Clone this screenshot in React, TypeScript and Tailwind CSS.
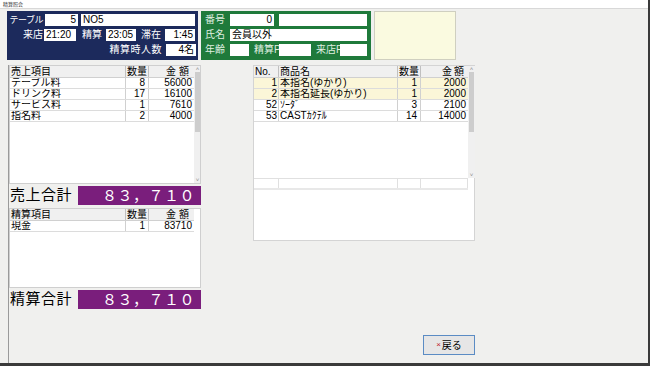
import React from "react";

const font = { fontFamily: '"Liberation Sans","Noto Sans CJK JP",sans-serif' };

const Box: React.FC<{ w: string; right?: boolean; children?: React.ReactNode }> = ({ w, right, children }) => (
  <div
    className={`${w} shrink-0 h-[12px] bg-white text-black text-[10px] leading-[12px] px-[2px] whitespace-nowrap overflow-hidden ${
      right ? "text-right" : ""
    }`}
  >
    {children}
  </div>
);

const Label: React.FC<{ w: string; children: React.ReactNode }> = ({ w, children }) => (
  <div className={`${w} shrink-0 whitespace-nowrap overflow-visible leading-[12px]`}>{children}</div>
);

const ScrollBar: React.FC<{ thumb?: boolean }> = ({ thumb = true }) => (
  <div className="w-[7px] shrink-0 h-full bg-[#f0f0f0] flex flex-col items-center">
    <div className="h-[6px] text-[6px] leading-[6px] text-[#888]">˄</div>
    {thumb && <div className="w-[5px] h-[60px] bg-[#cdcdcd]" />}
    <div className="flex-1" />
    <div className="h-[6px] text-[6px] leading-[6px] text-[#888]">˅</div>
  </div>
);

type Row = { name: string; qty: string; amount: string };

const cell = "overflow-hidden whitespace-nowrap leading-[10px]";

const LeftList: React.FC<{ title: string; rows: Row[]; h: string; scroll?: boolean }> = ({ title, rows, h, scroll }) => (
  <div className={`${h} w-[192px] bg-white border border-[#cfcfcf] flex overflow-hidden`}>
    <div className="w-[184px] flex flex-col">
      <div className="flex h-[12px] shrink-0 bg-[#f0f0f0] border-b border-[#d0d0d0] text-[10px] overflow-hidden">
        <div className={`w-[116px] pl-[1px] border-r border-[#c0c0c0] ${cell} leading-[11px]`}>{title}</div>
        <div className={`w-[23px] text-center border-r border-[#c0c0c0] ${cell} leading-[11px]`}>数量</div>
        <div className={`w-[45px] text-right pr-[2px] tracking-[3px] ${cell} leading-[11px]`}>金額</div>
      </div>
      {rows.map((r, i) => (
        <div key={i} className="flex h-[11px] shrink-0 border-b border-[#dcdcdc] text-[10px] overflow-hidden">
          <div className={`w-[116px] pl-[1px] border-r border-[#d0d0d0] ${cell}`}>{r.name}</div>
          <div className={`w-[23px] text-right pr-[3px] border-r border-[#d0d0d0] ${cell}`}>{r.qty}</div>
          <div className={`w-[45px] text-right pr-[2px] ${cell}`}>{r.amount}</div>
        </div>
      ))}
    </div>
    {scroll && <ScrollBar />}
  </div>
);

const Total: React.FC<{ label: string; value: string }> = ({ label, value }) => (
  <div className="flex items-center h-[20px] w-[193px]">
    <div className="w-[69px] shrink-0 pl-[1px] text-[15px] leading-[20px] text-black tracking-[0.5px] whitespace-nowrap">{label}</div>
    <div className="w-[123px] shrink-0 h-[19px] bg-[#7a1e7c] text-white text-[15px] leading-[19px] text-right pr-[6px] tracking-[0.5px] whitespace-nowrap">
      {value}
    </div>
  </div>
);

const items = [
  { no: "1", name: "本指名(ゆかり)", qty: "1", amount: "2000", hi: true },
  { no: "2", name: "本指名延長(ゆかり)", qty: "1", amount: "2000", hi: true },
  { no: "52", name: "ｿｰﾀﾞ", qty: "3", amount: "2100", hi: false },
  { no: "53", name: "CASTｶｸﾃﾙ", qty: "14", amount: "14000", hi: false },
];

export default function App() {
  return (
    <div style={font} className="w-[650px] h-[366px] bg-[#f0f0ee] flex flex-col overflow-hidden border-r-2 border-b-[3px] border-[#3a3a3a] text-black">
      <div className="h-[9px] bg-white border-b border-[#d8d8d8] text-[5px] leading-[8px] pl-[3px] text-[#333]">精算照会</div>

      <div className="flex gap-[3px] mt-[2px] ml-[7px]">
        <div className="w-[191px] h-[49px] bg-[#1c2a5c] text-white text-[10px] flex flex-col gap-[3px] pt-[3px]">
          <div className="flex items-center">
            <Label w="w-[38px] pr-[2px] text-right text-[9px] tracking-[-0.5px]">テーブル</Label>
            <Box w="w-[33px]" right>5</Box>
            <div className="w-[3px] shrink-0" />
            <Box w="w-[114px]">NO5</Box>
          </div>
          <div className="flex items-center">
            <Label w="w-[37px] pr-[1px] text-right">来店</Label>
            <Box w="w-[32px]">21:20</Box>
            <Label w="w-[30px] pr-[4px] text-right">精算</Label>
            <Box w="w-[30px]">23:05</Box>
            <Label w="w-[29px] pr-[4px] text-right">滞在</Label>
            <Box w="w-[30px]" right>1:45</Box>
          </div>
          <div className="flex items-center justify-end pr-[2px]">
            <Label w="w-auto pr-[4px] tracking-[0.5px]">精算時人数</Label>
            <Box w="w-[30px]" right>4名</Box>
          </div>
        </div>

        <div className="w-[170px] h-[49px] bg-[#1f7a3b] text-[#dfeee0] text-[10px] flex flex-col gap-[3px] pt-[3px]">
          <div className="flex items-center">
            <Label w="w-[29px] pl-[4px]">番号</Label>
            <Box w="w-[44px]" right>0</Box>
            <div className="w-[5px] shrink-0" />
            <Box w="w-[88px]"></Box>
          </div>
          <div className="flex items-center">
            <Label w="w-[29px] pl-[4px]">氏名</Label>
            <Box w="w-[137px]">会員以外</Box>
          </div>
          <div className="flex items-center">
            <Label w="w-[29px] pl-[4px]">年齢</Label>
            <Box w="w-[19px]"></Box>
            <Label w="w-[30px] pl-[5px]">精算P</Label>
            <Box w="w-[32px]"></Box>
            <Label w="w-[29px] pl-[5px]">来店P</Label>
            <Box w="w-[27px]"></Box>
          </div>
        </div>

        <div className="w-[82px] h-[49px] bg-[#fafae0] border border-[#cfcfc0]" />
      </div>

      <div className="flex flex-1 mt-[5px]">
        <div className="ml-[8px] w-[193px] border-l border-[#9a9a9a] flex flex-col">
          <LeftList
            title="売上項目"
            h="h-[119px]"
            scroll
            rows={[
              { name: "テーブル料", qty: "8", amount: "56000" },
              { name: "ドリンク料", qty: "17", amount: "16100" },
              { name: "サービス料", qty: "1", amount: "7610" },
              { name: "指名料", qty: "2", amount: "4000" },
            ]}
          />
          <div className="mt-[1px]">
            <Total label="売上合計" value="８３，７１０" />
          </div>
          <div className="mt-[3px]">
            <LeftList title="精算項目" h="h-[80px]" rows={[{ name: "現金", qty: "1", amount: "83710" }]} />
          </div>
          <div className="mt-[1px]">
            <Total label="精算合計" value="８３，７１０" />
          </div>
        </div>

        <div className="ml-[52px] flex flex-col flex-1">
          <div className="w-[222px] h-[176px] bg-white border border-[#d4d4d4] flex flex-col">
            <div className="flex h-[112px]">
              <div className="w-[214px] flex flex-col">
                <div className="flex h-[12px] shrink-0 bg-[#f0f0f0] border-b border-[#d0d0d0] text-[10px] overflow-hidden">
                  <div className={`w-[25px] pl-[1px] border-r border-[#c0c0c0] ${cell} leading-[11px]`}>No.</div>
                  <div className={`w-[119px] pl-[1px] border-r border-[#c0c0c0] ${cell} leading-[11px]`}>商品名</div>
                  <div className={`w-[23px] text-center border-r border-[#c0c0c0] ${cell} leading-[11px]`}>数量</div>
                  <div className={`w-[47px] text-right pr-[2px] tracking-[2px] ${cell} leading-[11px]`}>金額</div>
                </div>
                {items.map((r) => (
                  <div
                    key={r.no}
                    className={`flex h-[11px] shrink-0 border-b border-[#dcdcdc] text-[10px] overflow-hidden ${r.hi ? "bg-[#fbf6d8]" : "bg-white"}`}
                  >
                    <div className={`w-[25px] text-right pr-[1px] border-r border-[#d0d0d0] ${cell}`}>{r.no}</div>
                    <div className={`w-[119px] pl-[1px] border-r border-[#d0d0d0] ${cell}`}>{r.name}</div>
                    <div className={`w-[23px] text-right pr-[3px] border-r border-[#d0d0d0] ${cell}`}>{r.qty}</div>
                    <div className={`w-[47px] text-right pr-[2px] ${cell}`}>{r.amount}</div>
                  </div>
                ))}
              </div>
              <ScrollBar />
            </div>
            <div className="flex h-[12px] w-[214px] border-t border-[#e0e0e0] border-b-2 border-b-[#e8e8e8]">
              <div className="w-[25px] border-r border-[#e0e0e0]" />
              <div className="w-[119px] border-r border-[#e0e0e0]" />
              <div className="w-[23px] border-r border-[#e0e0e0]" />
              <div className="w-[47px] border-r border-[#e0e0e0]" />
            </div>
          </div>
          <div className="flex-1" />
          <div className="ml-[170px] mb-[8px] w-[52px] h-[20px] border border-[#5b8cc4] bg-[#e6e6e6] flex items-center justify-center gap-[1px] text-[10px]">
            <span className="text-[#c0202a] text-[8px]">×</span>
            <span>戻る</span>
          </div>
        </div>
      </div>
    </div>
  );
}
